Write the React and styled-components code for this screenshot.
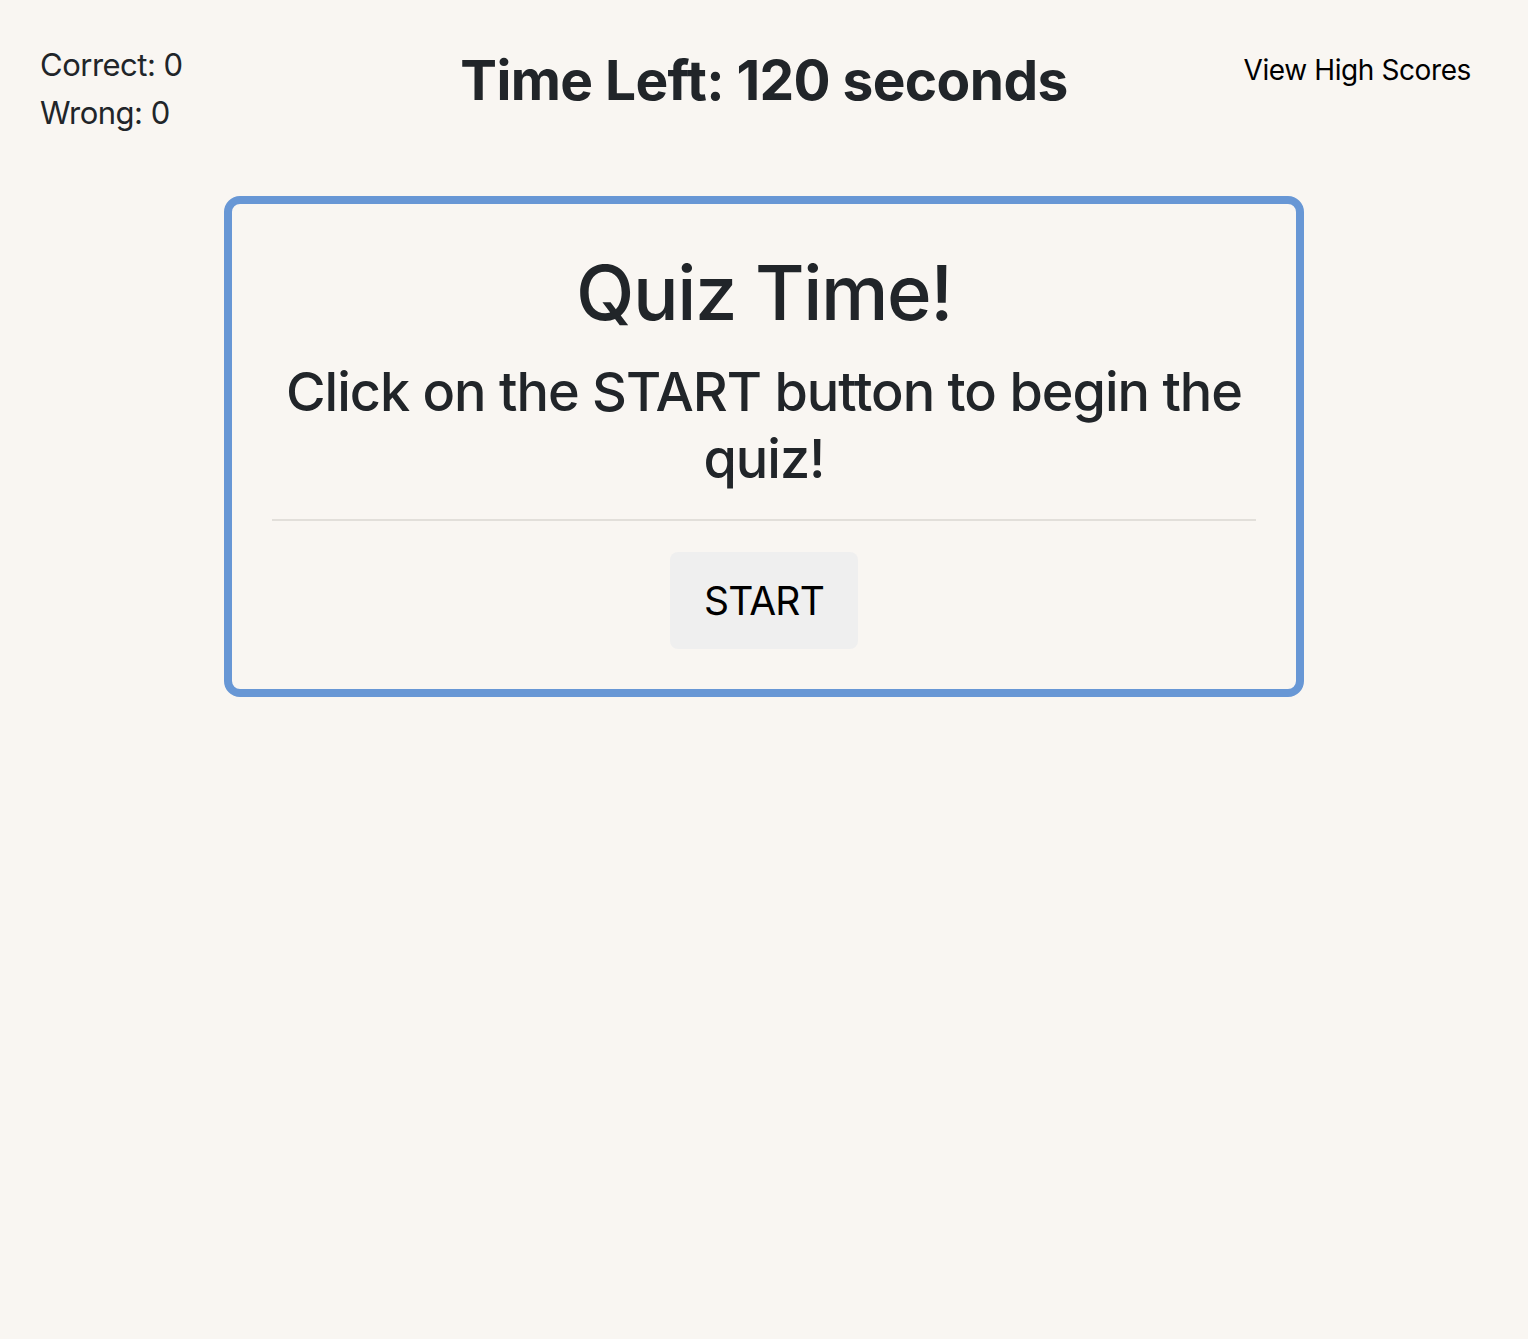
import React from "react";
import styled, { createGlobalStyle } from "styled-components";

const Global = createGlobalStyle`
  html, body { margin: 0; padding: 0; background: #f9f6f2; }
  body {
    font-family: Inter, "Noto Sans", "Liberation Sans", sans-serif;
    color: #212529;
    -webkit-font-smoothing: antialiased;
  }
`;

const Page = styled.div`
  min-height: 1339px;
  background: #f9f6f2;
`;

const Header = styled.header`
  display: grid;
  grid-template-columns: 1fr auto 1fr;
  align-items: start;
  padding: 41px 40px 0;
`;

const Stats = styled.div`
  display: flex;
  flex-direction: column;
  font-size: 31px;
  line-height: 48px;
  letter-spacing: -0.5px;
`;

const Timer = styled.h3`
  margin: 6px 0 0;
  font-size: 55px;
  line-height: 67px;
  font-weight: 700;
  letter-spacing: -0.6px;
`;

const ScoresLink = styled.a`
  justify-self: end;
  margin-top: 9px;
  padding-right: 17px;
  font-size: 28px;
  line-height: 40px;
  color: #000;
  text-decoration: none;
  letter-spacing: -0.4px;
  cursor: pointer;
`;

const Card = styled.section`
  width: 1080px;
  box-sizing: border-box;
  margin: 59px auto 0;
  padding: 40px;
  border: 8px solid #6897d5;
  border-radius: 16px;
  text-align: center;
`;

const Title = styled.h1`
  margin: 0 0 18px;
  font-size: 76px;
  line-height: 96px;
  font-weight: 500;
  letter-spacing: -1.4px;
`;

const Lead = styled.h3`
  margin: 0;
  font-size: 54px;
  line-height: 67px;
  font-weight: 500;
  letter-spacing: -1px;
`;

const Rule = styled.hr`
  margin: 27px 0 31px;
  border: 0;
  border-top: 2px solid #e2dfda;
`;

const StartButton = styled.button`
  display: inline-block;
  padding: 23px 34px;
  border: 0;
  border-radius: 8px;
  background: #efefef;
  color: #000;
  font-family: Inter, "Noto Sans", sans-serif;
  font-size: 39px;
  line-height: 51px;
  letter-spacing: -0.8px;
  cursor: pointer;
`;

export default function App() {
  return (
    <Page>
      <Global />
      <Header>
        <Stats>
          <span>Correct: 0</span>
          <span>Wrong: 0</span>
        </Stats>
        <Timer>Time Left: 120 seconds</Timer>
        <ScoresLink>View High Scores</ScoresLink>
      </Header>
      <Card>
        <Title>Quiz Time!</Title>
        <Lead>Click on the START button to begin the quiz!</Lead>
        <Rule />
        <StartButton>START</StartButton>
      </Card>
    </Page>
  );
}
